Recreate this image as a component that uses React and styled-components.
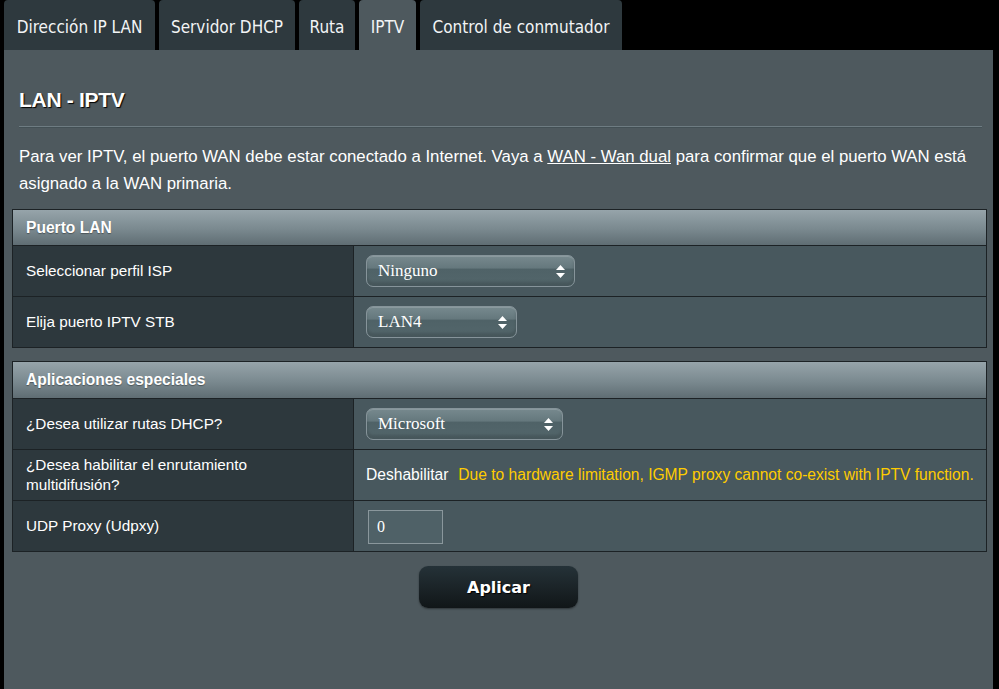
import styled, { createGlobalStyle } from "styled-components";

const GlobalStyle = createGlobalStyle`
  html, body {
    margin: 0;
    padding: 0;
    background: #000;
  }
  body {
    font-family: "Liberation Sans", Arial, sans-serif;
    color: #fff;
  }
`;

const Styled = {
  Page: styled.div`
    width: 999px;
    height: 689px;
    background: #000;
    overflow: hidden;
  `,
  TabBar: styled.div`
    display: flex;
    gap: 4px;
    height: 50px;
    padding-left: 4px;
  `,
  Tab: styled.div`
    display: flex;
    align-items: center;
    justify-content: center;
    width: ${(p) => p.$w}px;
    padding-top: 3px;
    box-sizing: border-box;
    border-radius: 4px 4px 0 0;
    background: ${(p) => (p.$active ? "#4e595e" : "#2e393e")};
    color: #f2f4f5;
    font-family: "DejaVu Sans Condensed", "DejaVu Sans", sans-serif;
    font-stretch: condensed;
    font-size: 17px;
    white-space: nowrap;
  `,
  Panel: styled.div`
    margin-left: 4px;
    width: 989px;
    height: 639px;
    background: #4e595e;
    padding: 0 6px 0 8px;
    box-sizing: border-box;
    display: flex;
    flex-direction: column;
  `,
  Intro: styled.div`
    padding: 0 5px 0 7px;
  `,
  Title: styled.h1`
    margin: 38px 0 0;
    font-family: "Liberation Sans", Arial, sans-serif;
    font-weight: bold;
    font-size: 21px;
    line-height: 24px;
    letter-spacing: -0.3px;
    color: #fff;
    text-shadow: 1px 1px 1px #000;
  `,
  Rule: styled.div`
    height: 1px;
    margin-top: 14px;
    background: #6e7c82;
    border-bottom: 1px solid #435055;
  `,
  Note: styled.p`
    margin: 15px 0 0;
    font-size: 16.8px;
    line-height: 27px;
    color: #fff;
  `,
  Link: styled.u`
    text-decoration: underline;
  `,
  Table: styled.div`
    border: 1px solid #1c2225;
    margin-top: ${(p) => p.$top}px;
    display: flex;
    flex-direction: column;
  `,
  Header: styled.div`
    height: ${(p) => p.$h}px;
    display: flex;
    align-items: center;
    padding-left: 13px;
    background: linear-gradient(#96a4aa, #7a898f 55%, #5f6d73);
    font-weight: bold;
    font-size: 15.6px;
    color: #fff;
    text-shadow: 0 1px 1px rgba(0, 0, 0, 0.35);
  `,
  Row: styled.div`
    display: grid;
    grid-template-columns: 341px 1fr;
    height: 50px;
    border-top: 1px solid #1c2225;
  `,
  Label: styled.div`
    display: flex;
    align-items: center;
    padding-left: 13px;
    background: #2d383d;
    border-right: 1px solid #1c2225;
    font-size: 15.3px;
    line-height: 20px;
    color: #fff;
  `,
  Value: styled.div`
    display: flex;
    align-items: center;
    padding-left: 12px;
    background: #48585e;
    font-size: 15.6px;
    color: #fff;
    white-space: nowrap;
  `,
  Select: styled.div`
    position: relative;
    width: ${(p) => p.$w}px;
    height: 32px;
    box-sizing: border-box;
    border: 1px solid #86949a;
    border-radius: 7px;
    background: linear-gradient(
      #77898e 0%,
      #65787d 40%,
      #4f6267 44%,
      #53666b 100%
    );
    box-shadow: inset 0 -4px 3px rgba(0, 0, 0, 0.15),
      inset 0 1px 0 rgba(255, 255, 255, 0.15);
    display: flex;
    align-items: center;
    padding-left: 11px;
    font-family: "Liberation Serif", "Times New Roman", serif;
    font-size: 17px;
    color: #fff;
  `,
  Arrows: styled.svg`
    position: absolute;
    right: 9px;
    top: 9px;
  `,
  Input: styled.div`
    width: 75px;
    height: 34px;
    box-sizing: border-box;
    margin: 1px 0 0 2px;
    border: 1px solid #8a979c;
    background: #4f6167;
    display: flex;
    align-items: center;
    padding-left: 8px;
    font-family: "Liberation Serif", "Times New Roman", serif;
    font-size: 16px;
    color: #fff;
  `,
  Warning: styled.span`
    margin-left: 10px;
    color: #ffcc00;
  `,
  Actions: styled.div`
    display: flex;
    justify-content: center;
    margin-top: 14px;
    padding-right: 2px;
  `,
  Button: styled.button`
    width: 159px;
    height: 42px;
    border: none;
    border-radius: 9px;
    background: linear-gradient(#253238, #111618);
    color: #fff;
    font-family: "DejaVu Sans", Verdana, sans-serif;
    font-weight: bold;
    font-size: 16px;
    text-shadow: 1px 1px 1px #000;
    box-shadow: 0 1px 2px rgba(0, 0, 0, 0.4);
  `,
};

const tabs = [
  { label: "Dirección IP LAN", w: 151 },
  { label: "Servidor DHCP", w: 136 },
  { label: "Ruta", w: 56 },
  { label: "IPTV", w: 57, active: true },
  { label: "Control de conmutador", w: 202 },
];

const Select = ({ value, width }) => (
  <Styled.Select $w={width}>
    {value}
    <Styled.Arrows width="9" height="13" viewBox="0 0 9 13">
      <path d="M4.5 0 L9 5 L0 5 Z" fill="#fff" />
      <path d="M0 8 L9 8 L4.5 13 Z" fill="#fff" />
    </Styled.Arrows>
  </Styled.Select>
);

const App = () => {
  return (
    <Styled.Page>
      <GlobalStyle />
      <Styled.TabBar>
        {tabs.map((tab) => (
          <Styled.Tab key={tab.label} $w={tab.w} $active={tab.active}>
            {tab.label}
          </Styled.Tab>
        ))}
      </Styled.TabBar>
      <Styled.Panel>
        <Styled.Intro>
          <Styled.Title>LAN - IPTV</Styled.Title>
          <Styled.Rule />
          <Styled.Note>
            Para ver IPTV, el puerto WAN debe estar conectado a Internet. Vaya
            a <Styled.Link>WAN - Wan dual</Styled.Link> para confirmar que el
            puerto WAN está asignado a la WAN primaria.
          </Styled.Note>
        </Styled.Intro>

        <Styled.Table $top={12}>
          <Styled.Header $h={35}>Puerto LAN</Styled.Header>
          <Styled.Row>
            <Styled.Label>Seleccionar perfil ISP</Styled.Label>
            <Styled.Value>
              <Select value="Ninguno" width={209} />
            </Styled.Value>
          </Styled.Row>
          <Styled.Row>
            <Styled.Label>Elija puerto IPTV STB</Styled.Label>
            <Styled.Value>
              <Select value="LAN4" width={151} />
            </Styled.Value>
          </Styled.Row>
        </Styled.Table>

        <Styled.Table $top={13}>
          <Styled.Header $h={36}>Aplicaciones especiales</Styled.Header>
          <Styled.Row>
            <Styled.Label>¿Desea utilizar rutas DHCP?</Styled.Label>
            <Styled.Value>
              <Select value="Microsoft" width={197} />
            </Styled.Value>
          </Styled.Row>
          <Styled.Row>
            <Styled.Label>
              ¿Desea habilitar el enrutamiento
              <br />
              multidifusión?
            </Styled.Label>
            <Styled.Value>
              Deshabilitar
              <Styled.Warning>
                Due to hardware limitation, IGMP proxy cannot co-exist with
                IPTV function.
              </Styled.Warning>
            </Styled.Value>
          </Styled.Row>
          <Styled.Row>
            <Styled.Label>UDP Proxy (Udpxy)</Styled.Label>
            <Styled.Value>
              <Styled.Input>0</Styled.Input>
            </Styled.Value>
          </Styled.Row>
        </Styled.Table>

        <Styled.Actions>
          <Styled.Button>Aplicar</Styled.Button>
        </Styled.Actions>
      </Styled.Panel>
    </Styled.Page>
  );
};

export default App;
